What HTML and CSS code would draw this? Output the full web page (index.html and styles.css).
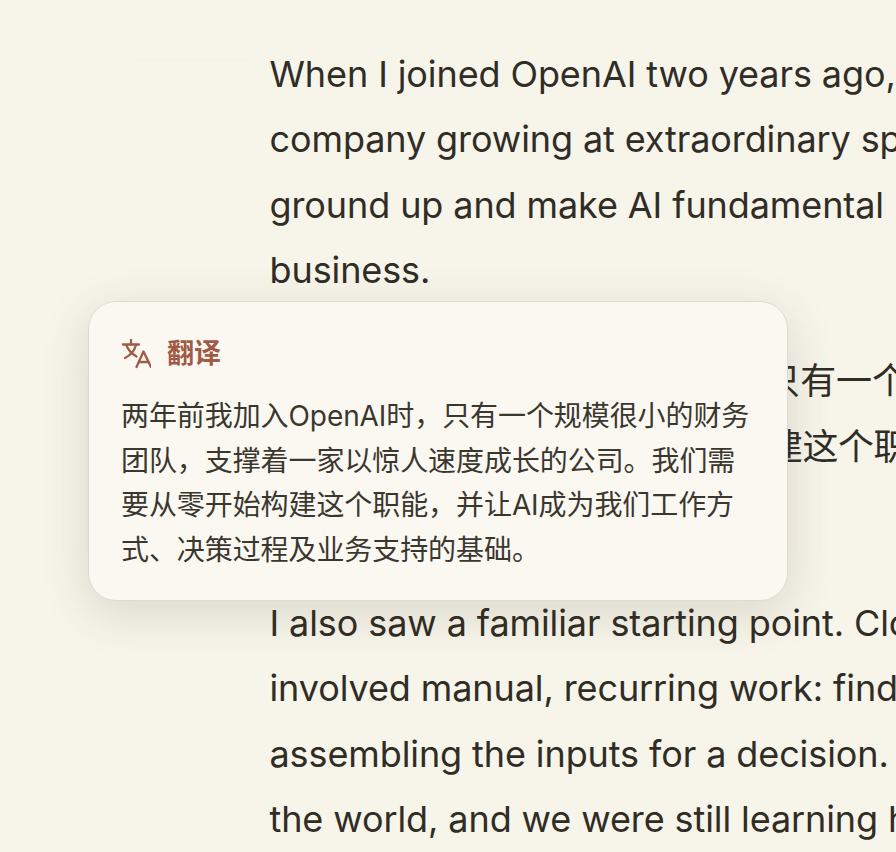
FILE: index.html
```html
<!DOCTYPE html>
<html lang="zh-CN">
<head>
<meta charset="utf-8">
<title>翻译</title>
<link rel="stylesheet" href="styles.css">
</head>
<body>
<main class="article">
  <p class="para"><span class="line">When I joined OpenAI two years ago, we had a small finance team and a</span><span class="line">company growing at extraordinary speed. We had to build the function from the</span><span class="line">ground up and make AI fundamental&nbsp; to how we work, decide and support the</span><span class="line">business.</span></p>
  <p class="para"><span class="line">两年前，当我加入 OpenAI时，只有一个规模很小的财务团队</span><span class="line tight">的大公司。我们需要从零开始构建这个职能，并让</span><span class="line">AI 成为基础。</span></p>
  <p class="para"><span class="line">I also saw a familiar starting point. Close and reporting still</span><span class="line">involved manual, recurring work: finding the data, checking it,</span><span class="line">assembling the inputs for a decision. The company was changing</span><span class="line">the world, and we were still learning how to change ourselves.</span></p>
</main>
<aside class="card">
  <header class="card-head">
    <svg class="card-icon" viewBox="0 0 30 30" fill="none" stroke="currentColor" stroke-width="2.300" stroke-linecap="round" stroke-linejoin="round" aria-hidden="true">
      <path d="M2 5.500h16"/>
      <path d="M10 0.500v5"/>
      <path d="M15 6c-1.500 5.500-5 10-11 13"/>
      <path d="M5.500 6.500c2 5 5.500 8.500 10 11"/>
      <path d="M15.500 28l7-15.500L30 28"/>
      <path d="M18 23h9.500"/>
    </svg>
    <h2 class="card-title">翻译</h2>
  </header>
  <p class="card-body">两年前我加入OpenAI时，只有一个规模很小的财务团队，支撑着一家以惊人速度成长的公司。我们需要从零开始构建这个职能，并让AI成为我们工作方式、决策过程及业务支持的基础。</p>
</aside>
</body>
</html>
```
FILE: styles.css
```css
* { box-sizing: border-box; }
html, body { margin: 0; height: 100%; }
body {
  position: relative;
  width: 896px;
  height: 852px;
  overflow: hidden;
  background: linear-gradient(90deg, #f4f1e7, #f4f1e7) 130px 59px / 125px 1px no-repeat #f7f4ea;
  color: #302d26;
  font-family: Inter, "Noto Sans CJK SC", sans-serif;
}
.article { padding: 42px 0 0 269.500px; }
.para { margin: 0 0 45.600px; font-size: 36px; line-height: 65.400px; letter-spacing: -0.100px; }
.line { display: block; white-space: nowrap; }
.tight { letter-spacing: -0.470px; }
.card {
  position: absolute;
  left: 88px;
  top: 301px;
  width: 700px;
  height: 300px;
  padding: 36px 32px 0;
  background: #fbf8f2;
  border: 1px solid #dfdbd0;
  border-radius: 28px;
  box-shadow: 0 12px 48px rgba(70, 60, 40, 0.16);
}
.card-head { display: flex; align-items: center; gap: 16px; height: 31px; color: #a05a46; }
.card-icon { width: 30px; height: 30px; flex: none; }
.card-title { margin: 0; font-size: 27px; line-height: 31px; font-weight: 600; }
.card-body { margin: 25px 0 0; font-size: 28px; line-height: 44.500px; letter-spacing: -0.080px; color: #3a372f; }
```
